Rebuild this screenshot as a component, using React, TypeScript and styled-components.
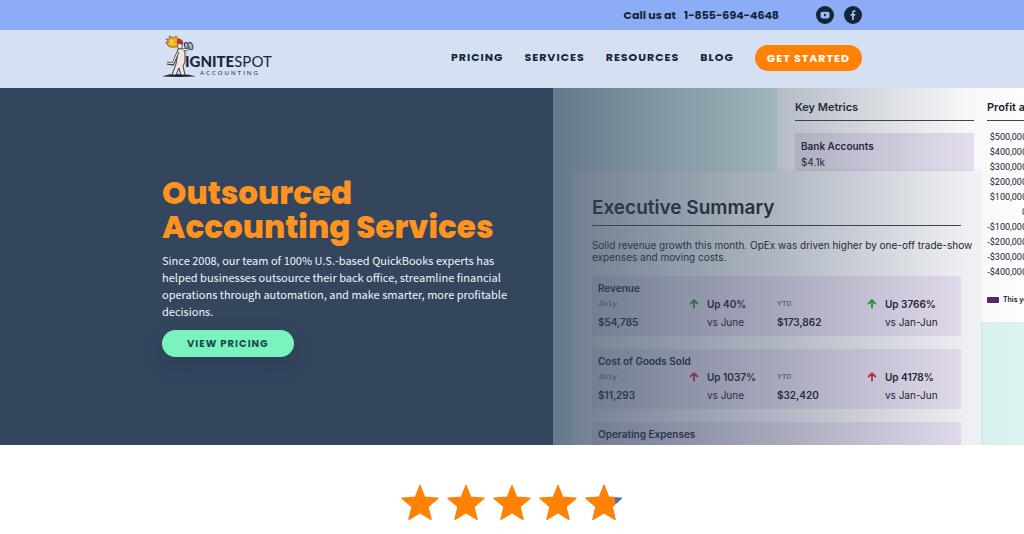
import React from "react";
import styled, { createGlobalStyle } from "styled-components";

const display = `Poppins, Inter, "Open Sans", sans-serif`;
const body = `"Source Sans Pro", "Noto Sans CJK SC", "Noto Sans", sans-serif`;

const GlobalStyle = createGlobalStyle`
  * { box-sizing: border-box; }
  body { margin: 0; background: #fff; color: #14253a; font-family: ${display}; overflow-x: hidden; }
  h1, h2, h3, p, ul { margin: 0; padding: 0; }
`;

const Container = styled.div`
  width: 100%;
  max-width: 700px;
  margin: 0 auto;
  display: flex;
  align-items: center;
`;

const TopBar = styled.div`
  background: #8cadf5;
  padding: 5px 0;
`;

const TopItems = styled(Container)`
  justify-content: flex-end;
  gap: 10px;
  font-size: 11px;
  line-height: 20px;
  font-weight: 700;
`;

const Phone = styled.p`
  display: flex;
  gap: 8px;
  margin-right: 27px;
`;

const PlainLink = styled.a`
  color: inherit;
  text-decoration: none;
  svg { display: block; }
`;

const SocialLink = styled.a`
  display: block;
  width: 18px;
  height: 18px;
  svg { display: block; }
`;

const Header = styled.header`
  background: #d5e1f2;
  padding: 5px 0 8px;
`;

const HeaderRow = styled(Container)`
  justify-content: space-between;
`;

const Nav = styled.nav`
  display: flex;
  align-items: center;
  gap: 21px;
  font-size: 11px;
  font-weight: 700;
  letter-spacing: 1px;
`;

const pill = `
  border: 0;
  border-radius: 14px;
  font-family: ${display};
  font-weight: 700;
  letter-spacing: 1px;
  text-align: center;
`;

const StartButton = styled.button`
  ${pill}
  padding: 0 12px;
  font-size: 11px;
  line-height: 26px;
  color: #fff;
  background: #ff8205;
`;

const PricingButton = styled.button`
  ${pill}
  margin-top: 10px;
  padding: 0 25px;
  font-size: 10px;
  line-height: 27px;
  color: #1c4a55;
  background: #7af3bf;
  box-shadow: 0 8px 20px rgba(30, 45, 65, 0.25);
`;

const Hero = styled.section`
  display: grid;
  grid-template-columns: 54% 46%;
  min-height: 357px;
  background: #33465e;
`;

const HeroCopy = styled.div`
  padding: 88px 40px 40px calc(50vw - 350px);
`;

const HeroTitle = styled.h1`
  font-size: 31px;
  line-height: 34px;
  font-weight: 800;
  color: #ff931f;
  white-space: nowrap;
`;

const HeroText = styled.p`
  margin-top: 8px;
  font-family: ${body};
  font-size: 11px;
  line-height: 17px;
  color: #f1f4f8;
`;

const Preview = styled.div`
  position: relative;
  overflow: hidden;
  background: #dcf4f1;
  font-family: Inter, sans-serif;
  color: #20202c;
`;

const Shade = styled.div`
  position: absolute;
  inset: 0;
  background: linear-gradient(90deg, rgba(51, 70, 94, 0.7), rgba(51, 70, 94, 0.36) 47%, rgba(51, 70, 94, 0.03) 88%, rgba(51, 70, 94, 0));
`;

const ReportCard = styled.div`
  display: flex;
  gap: 13px;
  margin-left: 224px;
  height: 234px;
  padding: 12px 0 0 18px;
  background: #fdfdfe;
`;

const ReportColumn = styled.div`
  flex: none;
  width: 179px;
`;

const ReportTitle = styled.h3`
  font-size: 11px;
  line-height: 15px;
  font-weight: 600;
  padding-bottom: 5px;
  border-bottom: 1px solid #41414b;
  white-space: nowrap;
`;

const Metric = styled.div`
  margin-top: 12px;
  padding: 5px 6px 1px;
  background: #e9e1f2;
  font-size: 10px;
  line-height: 16px;
`;

const Strong = styled.strong`
  display: block;
  font-weight: 600;
`;

const AxisLabels = styled.ul`
  list-style: none;
  width: 40px;
  margin-top: 9px;
  font-family: Roboto, sans-serif;
  font-size: 9px;
  line-height: 15px;
  text-align: right;
  white-space: nowrap;
`;

const Legend = styled.p`
  display: flex;
  align-items: center;
  gap: 4px;
  margin-top: 15px;
  font-size: 7px;
  line-height: 10px;
  font-weight: 600;
`;

const Swatch = styled.span`
  width: 12px;
  height: 6px;
  border-radius: 1px;
  background: #58256b;
`;

const SummaryCard = styled.div`
  position: absolute;
  top: 83px;
  left: 19px;
  width: 409px;
  height: 300px;
  padding: 24px 20px 0;
  background: #f4f5f8;
  box-shadow: 0 0 3px rgba(60, 70, 90, 0.12);
`;

const SummaryTitle = styled.h2`
  font-size: 19px;
  line-height: 26px;
  font-weight: 600;
  padding-bottom: 4px;
  border-bottom: 1px solid #41414b;
`;

const SummaryText = styled.p`
  margin: 13px 0;
  font-size: 10px;
  line-height: 12px;
  white-space: nowrap;
`;

const Row = styled.div`
  height: 60px;
  margin-bottom: 13px;
  padding: 6px 6px 0;
  background: #e8dff1;
  font-size: 10px;
`;

const RowTitle = styled.h3`
  font-size: 10px;
  line-height: 13px;
  font-weight: 600;
`;

const Figures = styled.div`
  display: grid;
  grid-template-columns: 91px 18px 70px 90px 18px 1fr;
  line-height: 18px;
  white-space: nowrap;
`;

const Period = styled.span`
  font-family: "Liberation Mono", monospace;
  font-size: 8px;
  color: #50505c;
`;

const Value = styled.span`
  font-weight: 600;
`;

const Trend = styled.svg`
  align-self: center;
`;

const Ratings = styled.section`
  display: flex;
  justify-content: center;
  gap: 8px;
  padding: 39px 0 10px;
`;

const Arrow = ({ color }: { color: string }) => (
  <Trend width="10" height="10" viewBox="0 0 10 10" fill="none" stroke={color} strokeWidth="1.8">
    <path d="M5 9.2V1.5M1.2 5 5 1.3 8.8 5" />
  </Trend>
);

type Entry = { title: string; color: string; month: string; monthUp: string; ytd: string; ytdUp: string };

const entries: Entry[] = [
  { title: "Revenue", color: "#2f9a2f", month: "$54,785", monthUp: "Up 40%", ytd: "$173,862", ytdUp: "Up 3766%" },
  { title: "Cost of Goods Sold", color: "#d02a3c", month: "$11,293", monthUp: "Up 1037%", ytd: "$32,420", ytdUp: "Up 4178%" },
];

const axis = ["$500,000", "$400,000", "$300,000", "$200,000", "$100,000", "0", "-$100,000", "-$200,000", "-$300,000", "-$400,000"];

const Logo = () => (
  <svg width="110" height="45" viewBox="0 0 110 45" role="img" aria-label="Ignite Spot Accounting">
    <path d="M0 41.5Q8 38.6 17 39.2Q27 39 34 41.5Q17 42.4 0 41.5Z" fill="#17263a" />
    <path d="M16 14Q21 12 23 17L23 27L21 31L23 40H19L17 33L14 40H10L14 29L15 23Z" fill="#efe5dc" stroke="#2a2c34" strokeWidth=".9" />
    <path d="M16 17L11 29L5 28M21 15L26 14L27 11" fill="none" stroke="#2a2c34" strokeWidth="2.8" strokeLinejoin="round" />
    <path d="M16 17L11 28.6L4.6 27.8M21 15L26 14L27 11" fill="none" stroke="#efe5dc" strokeWidth="1.3" strokeLinejoin="round" />
    <path d="M14 12C9 13 4 11 6 9L3.5 7.5L6.5 7L4 4L8 4.5L7 1L12 3L14 1L17 4Q20 5 18 9Z" fill="#f9a51f" stroke="#6b4a2a" strokeWidth=".7" />
    <path d="M7.5 4.5L11 6L8.5 8L13 9.5" fill="none" stroke="#ffe05a" strokeWidth="1.3" />
    <path d="M15 4Q20 3 21.5 8L20 10L15 8Z" fill="#c92c2d" />
    <path d="M16 8L20.5 9.5L19.5 14L15.5 13Z" fill="#efe5dc" stroke="#2a2c34" strokeWidth=".7" />
    <ellipse cx="24.5" cy="10.5" rx="2" ry="3" fill="#a6b3c2" stroke="#344052" transform="rotate(-15 24.5 10.5)" />
    <ellipse cx="28.5" cy="11" rx="2.2" ry="3.8" fill="#a6b3c2" stroke="#344052" transform="rotate(-20 28.5 11)" />
    <text x="23" y="32" fontFamily="Lato, sans-serif" fontSize="15" fill="#17263a">
      <tspan fontWeight="900">IGNITE</tspan>SPOT
    </text>
    <text x="38" y="40" fontFamily="Lato, sans-serif" fontSize="6" letterSpacing="2" fill="#17263a">ACCOUNTING</text>
  </svg>
);

const starPath = "M19 1.5 23.6 13.2 37 14.2 27 22.8 30 35.4 19 28.6 8 35.4 11 22.8 1 14.2 14.4 13.2Z";

const Star = ({ partial }: { partial?: boolean }) => (
  <svg width="38" height="38" viewBox="0 0 38 38" aria-hidden="true">
    <clipPath id="filled"><path d="M0 0H30V16L31 38H0Z" /></clipPath>
    {partial && <path d={starPath} fill="#5468bd" stroke="#5468bd" strokeLinejoin="round" />}
    <path
      d={starPath}
      fill="#ff8205"
      stroke="#ff8205"
      strokeWidth="1.4"
      strokeLinejoin="round"
      clipPath={partial ? "url(#filled)" : undefined}
    />
  </svg>
);

export default function App() {
  return (
    <>
      <GlobalStyle />
      <TopBar>
        <TopItems>
          <Phone>
            <span>Call us at</span>
            <PlainLink href="tel:18556944648">1-855-694-4648</PlainLink>
          </Phone>
          <SocialLink href="#youtube" aria-label="YouTube">
            <svg width="18" height="18" viewBox="0 0 18 18">
              <circle cx="9" cy="9" r="9" fill="#14253a" />
              <rect x="4.5" y="5.8" width="9" height="6.6" rx="1.8" fill="#9db9f6" />
              <path d="M8 7.4 10.8 9 8 10.6Z" fill="#14253a" />
            </svg>
          </SocialLink>
          <SocialLink href="#facebook" aria-label="Facebook">
            <svg width="18" height="18" viewBox="0 0 18 18">
              <circle cx="9" cy="9" r="9" fill="#14253a" />
              <path d="M8 14V9.7H6.5V8H8V6.7C8 5 9 4.2 10.3 4.2L11.5 4.3V5.8H10.7C9.9 5.8 9.8 6.2 9.8 6.8V8H11.5L11.2 9.7H9.8V14Z" fill="#9db9f6" />
            </svg>
          </SocialLink>
        </TopItems>
      </TopBar>
      <Header>
        <HeaderRow>
          <PlainLink href="#home"><Logo /></PlainLink>
          <Nav>
            <PlainLink href="#pricing">PRICING</PlainLink>
            <PlainLink href="#services">SERVICES</PlainLink>
            <PlainLink href="#resources">RESOURCES</PlainLink>
            <PlainLink href="#blog">BLOG</PlainLink>
            <StartButton>GET STARTED</StartButton>
          </Nav>
        </HeaderRow>
      </Header>
      <Hero>
        <HeroCopy>
          <HeroTitle>Outsourced<br />Accounting Services</HeroTitle>
          <HeroText>
            Since 2008, our team of 100% U.S.-based QuickBooks experts has helped businesses outsource
            their back office, streamline financial operations through automation, and make smarter,
            more profitable decisions.
          </HeroText>
          <PricingButton>VIEW PRICING</PricingButton>
        </HeroCopy>
        <Preview>
          <ReportCard>
            <ReportColumn>
              <ReportTitle>Key Metrics</ReportTitle>
              <Metric><Strong>Bank Accounts</Strong>$4.1k</Metric>
            </ReportColumn>
            <ReportColumn>
              <ReportTitle>Profit a</ReportTitle>
              <AxisLabels>{axis.map((label) => <li key={label}>{label}</li>)}</AxisLabels>
              <Legend><Swatch />This ye</Legend>
            </ReportColumn>
          </ReportCard>
          <SummaryCard>
            <SummaryTitle>Executive Summary</SummaryTitle>
            <SummaryText>
              Solid revenue growth this month. OpEx was driven higher by one-off trade-show<br />
              expenses and moving costs.
            </SummaryText>
            {entries.map((e) => (
              <Row key={e.title}>
                <RowTitle>{e.title}</RowTitle>
                <Figures>
                  <Period>July</Period><Arrow color={e.color} /><Value>{e.monthUp}</Value>
                  <Period>YTD</Period><Arrow color={e.color} /><Value>{e.ytdUp}</Value>
                  <Value>{e.month}</Value><span /><span>vs June</span>
                  <Value>{e.ytd}</Value><span /><span>vs Jan-Jun</span>
                </Figures>
              </Row>
            ))}
            <Row><RowTitle>Operating Expenses</RowTitle></Row>
          </SummaryCard>
          <Shade />
        </Preview>
      </Hero>
      <Ratings aria-label="Customer rating">
        <Star /><Star /><Star /><Star /><Star partial />
      </Ratings>
    </>
  );
}
